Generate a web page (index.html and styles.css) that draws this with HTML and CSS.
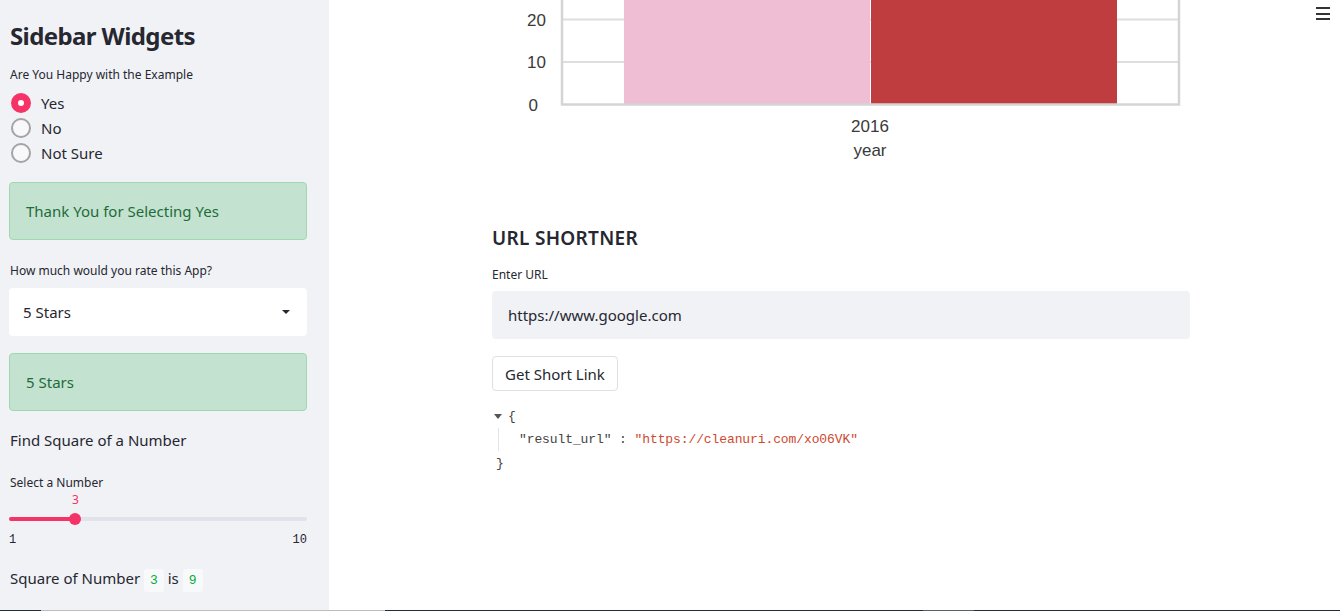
FILE: index.html
```html
<!DOCTYPE html>
<html>
<head>
<meta charset="utf-8">
<link rel="stylesheet" href="styles.css">
</head>
<body>
<div class="page">
  <aside class="sidebar">
    <h1 class="title">Sidebar Widgets</h1>
    <div class="label l-happy">Are You Happy with the Example</div>
    <div class="radios">
      <div class="radio"><span class="dot on"></span><span>Yes</span></div>
      <div class="radio"><span class="dot"></span><span>No</span></div>
      <div class="radio"><span class="dot"></span><span>Not Sure</span></div>
    </div>
    <div class="success s1">Thank You for Selecting Yes</div>
    <div class="label l-rate">How much would you rate this App?</div>
    <div class="select"><span>5 Stars</span><span class="caret"></span></div>
    <div class="success s2">5 Stars</div>
    <div class="text find">Find Square of a Number</div>
    <div class="label l-num">Select a Number</div>
    <div class="slider-val"><span>3</span></div>
    <div class="slider"><div class="track"><div class="fill"></div><div class="thumb"></div></div></div>
    <div class="ticks"><span>1</span><span>10</span></div>
    <div class="text result">Square of Number <code>3</code> is <code>9</code></div>
  </aside>
  <main class="main">
    <div class="menu"><span></span><span></span><span></span></div>
    <div class="content">
      <svg class="chart" width="698" height="170" viewBox="0 0 698 170">
        <line x1="70" y1="19.5" x2="687" y2="19.5" stroke="#dedede" stroke-width="2"/>
        <line x1="70" y1="62" x2="687" y2="62" stroke="#dedede" stroke-width="2"/>
        <rect x="132" y="0" width="246" height="104" fill="#efbdd4"/>
        <rect x="379" y="0" width="246" height="104" fill="#bf3d3f"/>
        <line x1="70" y1="0" x2="70" y2="105" stroke="#d4d4d4" stroke-width="2.5"/>
        <line x1="687" y1="0" x2="687" y2="105" stroke="#d4d4d4" stroke-width="2.5"/>
        <line x1="69" y1="104.5" x2="688" y2="104.5" stroke="#d4d4d4" stroke-width="2.5"/>
        <g class="ax" font-family="Liberation Sans, Arial, sans-serif" font-size="17" fill="#3a3a3a">
          <text x="54" y="26" text-anchor="end">20</text>
          <text x="54" y="68" text-anchor="end">10</text>
          <text x="46" y="111" text-anchor="end">0</text>
          <text x="378" y="132" text-anchor="middle">2016</text>
          <text x="378" y="156" text-anchor="middle">year</text>
        </g>
      </svg>
      <h2 class="heading">URL SHORTNER</h2>
      <div class="label l-url">Enter URL</div>
      <div class="input">https://www.google.com</div>
      <button class="btn">Get Short Link</button>
      <div class="json">
        <div class="jrow"><span class="tri"></span><span class="brace">{</span></div>
        <div class="jbody"><span class="key">"result_url"</span><span class="colon"> : </span><span class="val">"https://cleanuri.com/xo06VK"</span></div>
        <div class="jrow close"><span class="brace">}</span></div>
      </div>
    </div>
  </main>
</div>
<div class="taskbar"><span class="t1"></span><span class="t2"></span><span class="t3"></span><span class="t4"></span><span class="t5"></span></div>
</body>
</html>
```
FILE: styles.css
```css
html, body {
  margin: 0;
  padding: 0;
  width: 1340px;
  height: 611px;
  overflow: hidden;
  font-family: "Noto Sans", "Open Sans", sans-serif;
  color: #262730;
  background: #fff;
}
.page {
  display: flex;
  height: 610px;
}
.sidebar {
  width: 329px;
  flex: none;
  background: #f0f2f6;
  padding: 0 22px 0 9px;
  box-sizing: border-box;
}
.title {
  margin: 20px 0 0 1px;
  font-size: 24px;
  line-height: 32px;
  font-weight: 700;
  letter-spacing: -0.6px;
}
.label {
  font-size: 12px;
  line-height: 16px;
  margin-left: 1px;
}
.l-happy { margin-top: 15px; }
.radios { margin-top: 7px; }
.radio {
  display: flex;
  align-items: center;
  height: 25px;
  font-size: 15px;
  gap: 10px;
  padding-left: 2px;
}
.dot {
  width: 16px;
  height: 16px;
  border: 2px solid #a3a3a8;
  border-radius: 50%;
  background: #f8f8fa;
  flex: none;
}
.dot.on {
  border-color: #f63366;
  background: #f63366;
  position: relative;
}
.dot.on::after {
  content: "";
  position: absolute;
  left: 5px;
  top: 5px;
  width: 6px;
  height: 6px;
  border-radius: 50%;
  background: #fff;
}
.success {
  height: 58px;
  box-sizing: border-box;
  background: #c3e3d0;
  border: 1px solid #9fd7b1;
  border-radius: 4px;
  color: #1f6b3a;
  font-size: 15px;
  display: flex;
  align-items: center;
  padding-left: 16px;
}
.s1 { margin-top: 17px; }
.l-rate { margin-top: 23px; }
.select {
  margin-top: 9px;
  height: 48px;
  background: #fff;
  border-radius: 4px;
  display: flex;
  align-items: center;
  justify-content: space-between;
  padding: 0 17px 0 14px;
  font-size: 15px;
}
.caret {
  width: 0;
  height: 0;
  border-left: 4px solid transparent;
  border-right: 4px solid transparent;
  border-top: 4px solid #262730;
}
.s2 { margin-top: 17px; }
.text {
  font-size: 15px;
  line-height: 24px;
  margin-left: 1px;
}
.find { margin-top: 17px; }
.l-num { margin-top: 23px; }
.slider-val {
  margin-top: 2px;
  height: 14px;
  font-size: 12px;
  line-height: 14px;
  color: #f63366;
  position: relative;
}
.slider-val span {
  position: absolute;
  left: 63px;
}
.slider {
  margin-top: 2px;
  height: 20px;
  display: flex;
  align-items: center;
}
.track {
  position: relative;
  width: 100%;
  height: 4px;
  border-radius: 2px;
  background: #e0e3e9;
}
.fill {
  width: 66px;
  height: 4px;
  border-radius: 2px;
  background: #f63366;
}
.thumb {
  position: absolute;
  left: 60px;
  top: -4px;
  width: 12px;
  height: 12px;
  border-radius: 50%;
  background: #f63366;
}
.ticks {
  margin-top: 4px;
  display: flex;
  justify-content: space-between;
  font-family: "Liberation Mono", monospace;
  font-size: 12px;
  line-height: 14px;
}
.result { margin-top: 19px; }
.result code {
  font-family: "Liberation Mono", monospace;
  font-size: 13px;
  color: #09ab3b;
  background: #f8f9fb;
  border-radius: 3px;
  padding: 4px 6px;
}
.main {
  flex: 1;
  position: relative;
}
.menu {
  position: absolute;
  right: 10px;
  top: 7px;
  width: 14px;
  display: flex;
  flex-direction: column;
  gap: 3.5px;
}
.menu span {
  height: 2px;
  background: #333;
}
.content {
  width: 698px;
  padding-left: 163px;
}
.chart {
  display: block;
}
.heading {
  margin: 56px 0 0;
  font-size: 19px;
  line-height: 24px;
  font-weight: 600;
  letter-spacing: 0.3px;
}
.l-url {
  margin-top: 17px;
  margin-left: 0;
}
.input {
  margin-top: 8px;
  height: 48px;
  background: #f0f2f6;
  border-radius: 4px;
  display: flex;
  align-items: center;
  padding-left: 16px;
  font-size: 15px;
}
.btn {
  margin-top: 17px;
  height: 35px;
  padding: 0 12px;
  background: #fff;
  border: 1px solid #e0e0e4;
  border-radius: 4px;
  font-family: inherit;
  font-size: 15px;
  color: #262730;
  display: block;
}
.json {
  margin-top: 13px;
  font-family: "Liberation Mono", monospace;
  font-size: 13px;
  letter-spacing: -0.1px;
  color: #444;
}
.jrow {
  height: 24px;
  display: flex;
  align-items: center;
  gap: 6px;
}
.tri {
  width: 0;
  height: 0;
  border-left: 4px solid transparent;
  border-right: 4px solid transparent;
  border-top: 5px solid #555;
  margin-left: 2px;
}
.close { padding-left: 4px; }
.jbody {
  margin-left: 6px;
  border-left: 1px solid #e4e4e4;
  padding-left: 20px;
  line-height: 23px;
}
.key { color: #444; }
.colon { color: #444; }
.val { color: #d0492f; }
.taskbar {
  display: flex;
  height: 1px;
}
.taskbar span { height: 1px; }
.t1 { width: 41px; background: #1f2f38; }
.t2 { width: 344px; background: #bcbcbc; }
.t3 { width: 538px; background: #1f2f38; }
.t4 { width: 51px; background: #56616a; }
.t5 { flex: 1; background: #1f2f38; }
```
